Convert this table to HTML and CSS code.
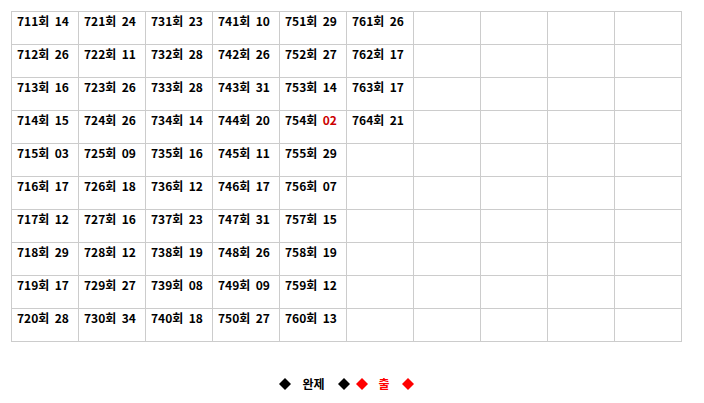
FILE: index.html
```html
<!DOCTYPE html>
<html lang="ko">
<head>
<meta charset="utf-8">
<link rel="stylesheet" href="styles.css">
</head>
<body>
<table class="grid">
<tr><td>711회 14</td><td>721회 24</td><td>731회 23</td><td>741회 10</td><td>751회 29</td><td>761회 26</td><td></td><td></td><td></td><td></td></tr>
<tr><td>712회 26</td><td>722회 11</td><td>732회 28</td><td>742회 26</td><td>752회 27</td><td>762회 17</td><td></td><td></td><td></td><td></td></tr>
<tr><td>713회 16</td><td>723회 26</td><td>733회 28</td><td>743회 31</td><td>753회 14</td><td>763회 17</td><td></td><td></td><td></td><td></td></tr>
<tr><td>714회 15</td><td>724회 26</td><td>734회 14</td><td>744회 20</td><td>754회 <span class="hit">02</span></td><td>764회 21</td><td></td><td></td><td></td><td></td></tr>
<tr><td>715회 03</td><td>725회 09</td><td>735회 16</td><td>745회 11</td><td>755회 29</td><td></td><td></td><td></td><td></td><td></td></tr>
<tr><td>716회 17</td><td>726회 18</td><td>736회 12</td><td>746회 17</td><td>756회 07</td><td></td><td></td><td></td><td></td><td></td></tr>
<tr><td>717회 12</td><td>727회 16</td><td>737회 23</td><td>747회 31</td><td>757회 15</td><td></td><td></td><td></td><td></td><td></td></tr>
<tr><td>718회 29</td><td>728회 12</td><td>738회 19</td><td>748회 26</td><td>758회 19</td><td></td><td></td><td></td><td></td><td></td></tr>
<tr><td>719회 17</td><td>729회 27</td><td>739회 08</td><td>749회 09</td><td>759회 12</td><td></td><td></td><td></td><td></td><td></td></tr>
<tr><td>720회 28</td><td>730회 34</td><td>740회 18</td><td>750회 27</td><td>760회 13</td><td></td><td></td><td></td><td></td><td></td></tr>
</table>
<div class="legend">
<svg class="dia" viewBox="0 0 12 12"><polygon points="6,0 12,6 6,12 0,6" fill="#000"/></svg>
<span class="word w1">완제</span>
<svg class="dia" viewBox="0 0 12 12"><polygon points="6,0 12,6 6,12 0,6" fill="#000"/></svg>
<svg class="dia d3" viewBox="0 0 12 12"><polygon points="6,0 12,6 6,12 0,6" fill="#ff0000"/></svg>
<span class="word w2">출</span>
<svg class="dia" viewBox="0 0 12 12"><polygon points="6,0 12,6 6,12 0,6" fill="#ff0000"/></svg>
</div>
</body>
</html>
```

FILE: styles.css
```css
body {
  margin: 11px 0 0 11px;
  font-family: "Noto Sans CJK KR", "Noto Sans", sans-serif;
  font-size: 12px;
  font-weight: bold;
  color: #000;
  background: #fff;
}
.grid {
  border-collapse: collapse;
  table-layout: fixed;
}
.grid td {
  width: 67px;
  height: 33px;
  padding: 0 0 0 5px;
  box-sizing: border-box;
  border: 1px solid #cccccc;
  vertical-align: top;
  line-height: 18px;
  white-space: pre;
  word-spacing: 2px;
}
.hit { color: #cc0000; }
.legend {
  width: 671px;
  margin-top: 34px;
  display: flex;
  justify-content: center;
  align-items: center;
  height: 16px;
}
.dia { width: 12px; height: 12px; display: block; }
.word { line-height: 16px; }
.w1 { margin: 0 13px 0 11px; }
.d3 { margin-left: 6px; }
.w2 { color: #ff0000; margin: 0 12px 0 11px; }
```
